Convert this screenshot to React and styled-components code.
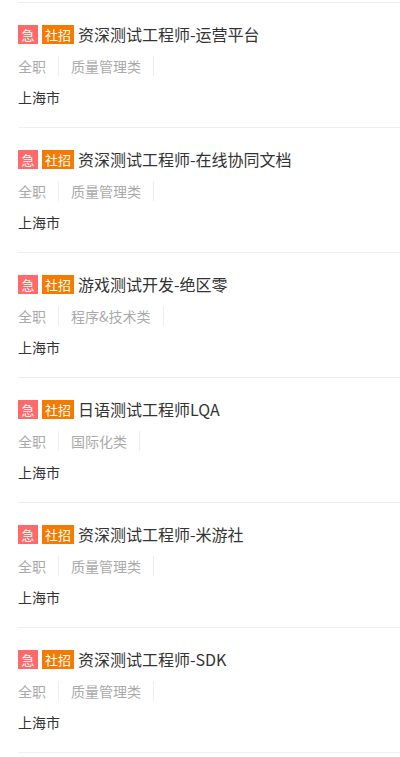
import React from 'react'
import styled, { createGlobalStyle } from 'styled-components'

const GlobalStyle = createGlobalStyle`
  body {
    margin: 0;
    background: #fff;
    font-family: "Noto Sans CJK SC", "Noto Sans", sans-serif;
  }
`

const List = styled.ul`
  list-style: none;
  margin: 0;
  padding: 2px 0 0 18px;
  border-top: 0;
`

const Item = styled.li`
  box-sizing: border-box;
  height: 125px;
  padding-top: 21px;
  border-bottom: 1px solid #eee;

  &:first-child {
    height: 126px;
    border-top: 1px solid #eee;
  }
`

const TitleRow = styled.div`
  display: flex;
  align-items: center;
  height: 20px;
`

const Badge = styled.span`
  display: inline-flex;
  align-items: center;
  justify-content: center;
  box-sizing: border-box;
  min-width: 20px;
  height: 19px;
  padding: 0 3px;
  margin-right: 4px;
  font-size: 13px;
  color: #fff;
  background: ${p => p.$color};
`

const Title = styled.span`
  font-size: 16px;
  line-height: 20px;
  color: #333;
`

const Meta = styled.div`
  display: flex;
  margin-top: 12px;
  height: 20px;
`

const Tag = styled.span`
  font-size: 14px;
  line-height: 20px;
  color: #aaa;
  padding: 0 12px;
  border-right: 1px solid #eee;

  &:first-child {
    padding-left: 0;
  }
`

const Location = styled.div`
  margin-top: 11px;
  font-size: 14px;
  line-height: 20px;
  color: #333;
`

const jobs = [
  { title: '资深测试工程师-运营平台', cat: '质量管理类' },
  { title: '资深测试工程师-在线协同文档', cat: '质量管理类' },
  { title: '游戏测试开发-绝区零', cat: '程序&技术类' },
  { title: '日语测试工程师LQA', cat: '国际化类' },
  { title: '资深测试工程师-米游社', cat: '质量管理类' },
  { title: '资深测试工程师-SDK', cat: '质量管理类' },
]

const App = () =>
  <>
    <GlobalStyle />
    <List>
      {jobs.map(job =>
        <Item key={job.title}>
          <TitleRow>
            <Badge $color="#fe6a6a">急</Badge>
            <Badge $color="#f57b00">社招</Badge>
            <Title>{job.title}</Title>
          </TitleRow>
          <Meta>
            <Tag>全职</Tag>
            <Tag>{job.cat}</Tag>
          </Meta>
          <Location>上海市</Location>
        </Item>
      )}
    </List>
  </>

export default App
